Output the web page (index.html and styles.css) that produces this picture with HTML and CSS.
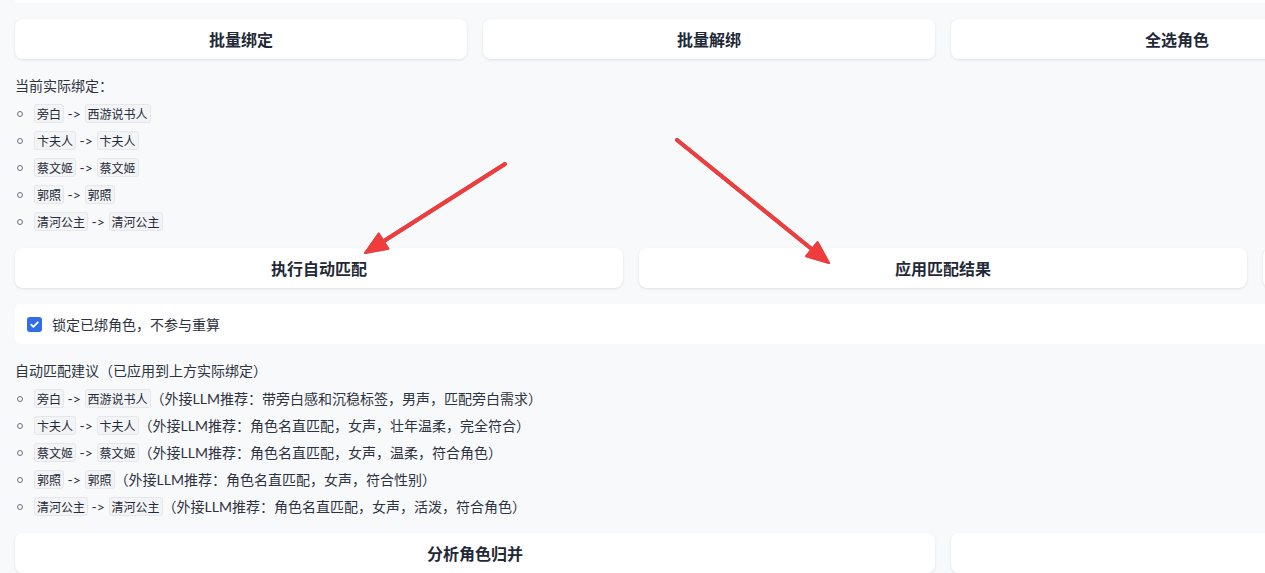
FILE: index.html
```html
<!DOCTYPE html>
<html lang="zh-CN">
<head>
    <meta charset="UTF-8">
    <meta name="viewport" content="width=device-width, initial-scale=1.0">
    <title>角色绑定</title>
    <link rel="stylesheet" href="styles.css">
</head>
<body>
    <div class="page">
        <div class="panel-tail"></div>

        <div class="btn-row">
            <button class="btn">批量绑定</button>
            <button class="btn">批量解绑</button>
            <button class="btn">全选角色</button>
            <button class="btn">清空选择</button>
        </div>

        <div class="md">
            <p>当前实际绑定：</p>
            <ul>
                <li><code>旁白</code> -&gt; <code>西游说书人</code></li>
                <li><code>卞夫人</code> -&gt; <code>卞夫人</code></li>
                <li><code>蔡文姬</code> -&gt; <code>蔡文姬</code></li>
                <li><code>郭照</code> -&gt; <code>郭照</code></li>
                <li><code>清河公主</code> -&gt; <code>清河公主</code></li>
            </ul>
        </div>

        <div class="btn-row">
            <button class="btn">执行自动匹配</button>
            <button class="btn">应用匹配结果</button>
            <button class="btn">清除匹配结果</button>
        </div>

        <label class="check-box">
            <input type="checkbox" checked>
            <span>锁定已绑角色，不参与重算</span>
        </label>

        <div class="md">
            <p>自动匹配建议（已应用到上方实际绑定）</p>
            <ul>
                <li><code>旁白</code> -&gt; <code>西游说书人</code>（外接LLM推荐：带旁白感和沉稳标签，男声，匹配旁白需求）</li>
                <li><code>卞夫人</code> -&gt; <code>卞夫人</code>（外接LLM推荐：角色名直匹配，女声，壮年温柔，完全符合）</li>
                <li><code>蔡文姬</code> -&gt; <code>蔡文姬</code>（外接LLM推荐：角色名直匹配，女声，温柔，符合角色）</li>
                <li><code>郭照</code> -&gt; <code>郭照</code>（外接LLM推荐：角色名直匹配，女声，符合性别）</li>
                <li><code>清河公主</code> -&gt; <code>清河公主</code>（外接LLM推荐：角色名直匹配，女声，活泼，符合角色）</li>
            </ul>
        </div>

        <div class="btn-row">
            <button class="btn">分析角色归并</button>
            <button class="btn">应用角色归并</button>
        </div>
    </div>

    <!-- red pointer arrows drawn on top of the page -->
    <svg class="marks" width="1265" height="573" viewBox="0 0 1265 573">
        <g fill="#f03c3c" stroke="#f03c3c" stroke-linecap="round" stroke-linejoin="round">
            <line x1="505" y1="164" x2="383.5" y2="241.2" stroke-width="4"/>
            <polygon points="365,253 388.3,248.8 378.7,233.6" stroke-width="2"/>
            <line x1="677" y1="140" x2="811.9" y2="249.2" stroke-width="4"/>
            <polygon points="829,263 806.2,256.2 817.6,242.2" stroke-width="2"/>
        </g>
    </svg>
</body>
</html>
```

FILE: styles.css
```css
html, body {
    margin: 0;
    overflow: hidden;
}

body {
    background: #f8f9fb;
    font-family: Lato, "Noto Sans CJK SC", sans-serif;
    color: #1f2937;
}

.page {
    width: 1856px;
    padding-left: 15px;
    display: flex;
    flex-direction: column;
    gap: 16px;
}

/* bottom edge of the block above */
.panel-tail {
    height: 3px;
    background: #fff;
    border-radius: 0 0 8px 8px;
}

.btn-row {
    display: flex;
    gap: 16px;
}

.btn {
    flex: 1;
    height: 40px;
    border: none;
    border-radius: 8px;
    background: #fff;
    box-shadow: 0 1px 3px rgba(0, 0, 0, 0.1);
    font-family: Lato, "Noto Sans CJK SC", sans-serif;
    font-size: 16px;
    font-weight: bold;
    color: #1f2937;
    cursor: pointer;
}

/* markdown output */
.md {
    font-size: 14px;
    color: #2d3340;
}

.md p {
    margin: 0;
    line-height: 22px;
}

.md ul {
    list-style: none;
    margin: 0;
    padding-left: 20px;
}

.md li {
    line-height: 21px;
    margin-top: 6px;
    white-space: nowrap;
}

.md li::before {
    content: "";
    display: inline-block;
    width: 4px;
    height: 4px;
    border: 1.5px solid #6b7280;
    border-radius: 50%;
    margin-left: -18px;
    margin-right: 11px;
    vertical-align: 2px;
}

.md code {
    font-family: "Noto Sans CJK SC", sans-serif;
    font-size: 12px;
    line-height: 14px;
    padding: 0 2px;
    background: #f3f4f6;
    border: 1px solid #e5e7eb;
    border-radius: 3px;
    color: #1f2937;
}

.check-box {
    display: flex;
    align-items: center;
    gap: 10px;
    height: 40px;
    padding-left: 12px;
    background: #fff;
    border-radius: 6px;
    font-size: 14px;
    color: #2d3340;
}

.check-box input {
    appearance: none;
    margin: 0;
    width: 15px;
    height: 15px;
    border-radius: 3px;
    background: #2f6ee8 url("data:image/svg+xml,%3Csvg xmlns='http://www.w3.org/2000/svg' viewBox='0 0 16 16'%3E%3Cpath d='M4.5 8.2l2.3 2.3 4.7-4.8' fill='none' stroke='white' stroke-width='2' stroke-linecap='round' stroke-linejoin='round'/%3E%3C/svg%3E") center / 15px 15px no-repeat;
}

.marks {
    position: absolute;
    top: 0;
    left: 0;
    pointer-events: none;
    filter: drop-shadow(0 0 0.6px rgba(60, 60, 60, 0.6));
}
```
